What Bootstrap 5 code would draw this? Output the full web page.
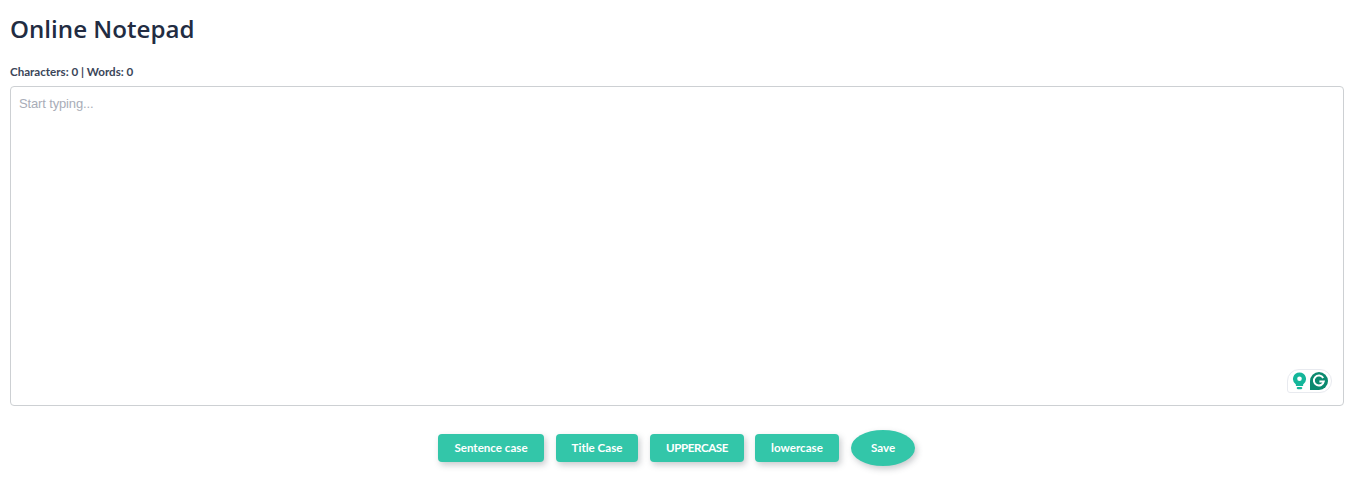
<!DOCTYPE html>
<html lang="en">
<head>
<meta charset="utf-8">
<title>Online Notepad</title>
<link href="https://cdn.jsdelivr.net/npm/bootstrap@5.3.0/dist/css/bootstrap.min.css" rel="stylesheet">
<style>
html,body{height:478px;overflow:hidden;background:#fff}
.pad-wrap{padding:0 10px}
.pad-title{font-family:"Open Sans",sans-serif;font-weight:600;font-size:24.15px;line-height:30px;color:#222c42;margin:0;padding-top:14px}
.pad-count{font-family:Lato,sans-serif;font-weight:700;font-size:11.6px;line-height:16px;color:#3a4558;margin:0;padding-top:20px;padding-bottom:6px}
.pad-box{position:relative;height:320px}
.pad-area{display:block;width:100%;height:100%;resize:none;font-family:"Liberation Sans",sans-serif;font-size:13px;letter-spacing:-.15px;line-height:20px;padding:7px 8px;border:1px solid #cdd0d3;border-radius:4px;color:#222c42;box-shadow:none}
.pad-area::placeholder{color:#a9adb8;opacity:1}
.pad-area:focus{outline:none;box-shadow:none;border-color:#cdd0d3}
.gram-badge{position:absolute;right:12px;bottom:13px;width:45px;height:24px;padding-left:2px;background:#fff;border:1px solid #e8eaef;border-radius:12px 12px 12px 3px;display:flex;align-items:center;justify-content:center;gap:2px}
.tool-row{padding-top:24px;padding-right:1px;gap:12px}
.tool-btn{font-family:Lato,sans-serif;font-weight:700;font-size:11.6px;line-height:16px;color:#fff;background:#33c6a9;border:0;border-radius:4px;height:28px;padding:0;box-shadow:2px 3px 6px rgba(60,70,80,.28)}
.tool-btn:hover{background:#33c6a9;color:#fff}
.tool-sentence{width:106px}
.tool-title{width:82px}
.tool-upper{letter-spacing:-.4px;width:94px}
.tool-lower{width:84px;margin-left:-1px}
.tool-save{height:36px;width:64px;border-radius:50%}
</style>
</head>
<body>
<div class="pad-wrap">
  <h1 class="pad-title">Online Notepad</h1>
  <p class="pad-count">Characters: 0 | Words: 0</p>
  <div class="pad-box">
    <textarea class="form-control pad-area" placeholder="Start typing..."></textarea>
    <div class="gram-badge">
      <svg width="15" height="18" viewBox="0 0 15 18" aria-hidden="true"><path d="M7.5.5a6.5 6.5 0 0 0-3.6 11.9v1.6h7.2v-1.6A6.5 6.5 0 0 0 7.5.5z" fill="#14b69a"/><circle cx="7.5" cy="6.8" r="2.3" fill="#fff"/><rect x="4.7" y="15" width="5.6" height="2.2" rx="1.1" fill="#14b69a"/></svg>
      <svg width="20" height="20" viewBox="0 0 20 20" aria-hidden="true"><path d="M10 1a9 9 0 1 1 0 18H1v-9a9 9 0 0 1 9-9z" fill="#0b8a6f"/><path d="M14.2 7a5 5 0 1 0 .6 3.4H10.4" fill="none" stroke="#fff" stroke-width="2"/></svg>
    </div>
  </div>
  <div class="d-flex justify-content-center align-items-center tool-row">
    <button type="button" class="btn tool-btn tool-sentence">Sentence case</button>
    <button type="button" class="btn tool-btn tool-title">Title Case</button>
    <button type="button" class="btn tool-btn tool-upper">UPPERCASE</button>
    <button type="button" class="btn tool-btn tool-lower">lowercase</button>
    <button type="button" class="btn tool-btn tool-save">Save</button>
  </div>
</div>
<script src="https://cdn.jsdelivr.net/npm/bootstrap@5.3.0/dist/js/bootstrap.bundle.min.js"></script>
</body>
</html>
